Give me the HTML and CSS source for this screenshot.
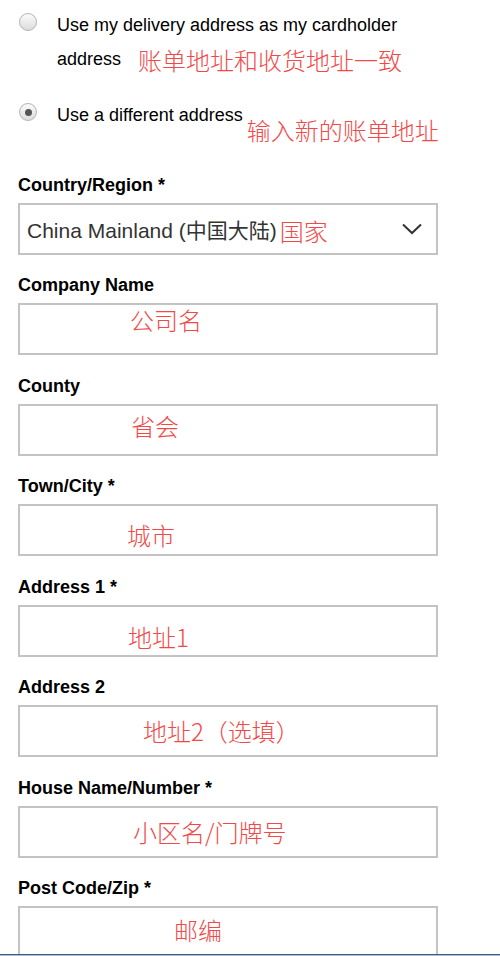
FILE: index.html
```html
<!DOCTYPE html>
<html lang="en">
<head>
<meta charset="utf-8">
<title>Billing address</title>
<link rel="stylesheet" href="styles.css">
</head>
<body>
<div class="page">
  <div class="options">
    <div class="option">
      <span class="radio"></span>
      <span class="opt-text">Use my delivery address as my cardholder address<span class="note note-a">账单地址和收货地址一致</span></span>
    </div>
    <div class="option option-2">
      <span class="radio checked"></span>
      <span class="opt-text nowrap">Use a different address<span class="note note-b">输入新的账单地址</span></span>
    </div>
  </div>

  <div class="field first">
    <div class="label">Country/Region *</div>
    <div class="box select">
      <span class="value">China Mainland (中国大陆)</span><span class="note note-inline">国家</span>
      <svg class="chev" width="20" height="12" viewBox="0 0 20 12"><path d="M1 1.5 L10 10 L19 1.5" fill="none" stroke="#333" stroke-width="2"/></svg>
    </div>
  </div>

  <div class="field">
    <div class="label">Company Name</div>
    <div class="box"><span class="note n1">公司名</span></div>
  </div>

  <div class="field">
    <div class="label">County</div>
    <div class="box"><span class="note n2">省会</span></div>
  </div>

  <div class="field">
    <div class="label">Town/City *</div>
    <div class="box"><span class="note n3">城市</span></div>
  </div>

  <div class="field">
    <div class="label">Address 1 *</div>
    <div class="box"><span class="note n4">地址1</span></div>
  </div>

  <div class="field">
    <div class="label">Address 2</div>
    <div class="box"><span class="note n5">地址2（选填）</span></div>
  </div>

  <div class="field">
    <div class="label">House Name/Number *</div>
    <div class="box"><span class="note n6">小区名/门牌号</span></div>
  </div>

  <div class="field">
    <div class="label">Post Code/Zip *</div>
    <div class="box"><span class="note n7">邮编</span></div>
  </div>
</div>
<div class="footer-edge"></div>
</body>
</html>
```

FILE: styles.css
```css
html, body {
  margin: 0;
  padding: 0;
  background: #fff;
}
body {
  font-family: "Liberation Sans", Arial, "Noto Sans CJK SC", sans-serif;
  color: #000;
  overflow: hidden;
  height: 956px;
}
.page {
  padding: 8px 0 0 18px;
  width: 420px;
}
.options {
  display: flex;
  flex-direction: column;
}
.option {
  display: flex;
  align-items: flex-start;
  font-size: 18px;
  line-height: 34px;
}
.option-2 {
  margin-top: 22px;
}
.radio {
  flex: none;
  width: 18px;
  height: 18px;
  box-sizing: border-box;
  border-radius: 50%;
  border: 1px solid #b4b4b4;
  background: linear-gradient(#fbfbfb, #dcdcdc);
  margin: 5px 20px 0 1px;
  display: flex;
  align-items: center;
  justify-content: center;
}
.radio.checked::after {
  content: "";
  width: 7px;
  height: 7px;
  border-radius: 50%;
  background: #555;
}
.option-2 .radio {
  margin-top: 5px;
}
.opt-text {
  flex: 1;
  min-width: 0;
}
.nowrap {
  white-space: nowrap;
}
.note {
  font-family: "Noto Sans CJK SC", sans-serif;
  font-weight: 300;
  color: #f24848;
  font-size: 24px;
}
.opt-text .note {
  line-height: 0;
}
.note-a {
  position: relative;
  top: 5px;
  margin-left: 17px;
}
.note-b {
  position: relative;
  top: 19px;
  margin-left: 4px;
}
.field {
  margin-top: 20.43px;
}
.field.first {
  margin-top: 43px;
}
.label {
  font-weight: bold;
  font-size: 18px;
  line-height: 20px;
  margin-bottom: 8px;
}
.box {
  box-sizing: border-box;
  width: 420px;
  height: 52px;
  border: 2px solid #c3c3c3;
  display: flex;
  align-items: flex-start;
}
.box .note {
  line-height: 24px;
}
.select {
  align-items: center;
  padding-left: 7px;
  padding-right: 14px;
}
.select .value {
  font-size: 21px;
  color: #333;
}
.note-inline {
  margin-left: 3px;
  margin-top: 4px;
}
.chev {
  margin-left: auto;
}
.n1 { margin: 3px 0 0 110px; }
.n2 { margin: 8px 0 0 111px; }
.n3 { margin: 17px 0 0 107px; }
.n4 { margin: 18px 0 0 108px; }
.n5 { margin: 12px 0 0 123px; }
.n6 { margin: 12px 0 0 113px; }
.n7 { margin: 10px 0 0 154px; }
.footer-edge {
  position: fixed;
  left: 0;
  right: 0;
  bottom: 0;
  height: 2px;
  border-top: 1px solid #3d5d7c;
  background: #a7c0d9;
  box-sizing: border-box;
}
```
